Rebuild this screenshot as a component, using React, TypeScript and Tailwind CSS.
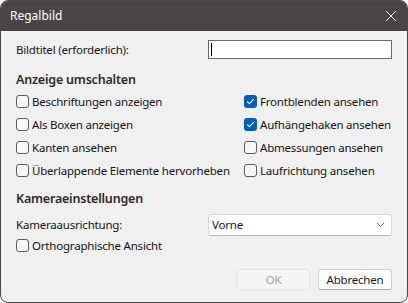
import React from "react";

type Item = { label: string; checked?: boolean; className?: string };

const leftItems: Item[] = [
  { label: "Beschriftungen anzeigen" },
  { label: "Als Boxen anzeigen" },
  { label: "Kanten ansehen" },
  { label: "Überlappende Elemente hervorheben" },
];

const rightItems: Item[] = [
  { label: "Frontblenden ansehen", checked: true },
  { label: "Aufhängehaken ansehen", checked: true },
  { label: "Abmessungen ansehen" },
  { label: "Laufrichtung ansehen" },
];

function Checkbox({ label, checked, className = "h-[23px]" }: Item) {
  return (
    <label className={`flex items-center gap-[3px] whitespace-nowrap ${className}`}>
      {checked ? (
        <span className="w-[13px] h-[13px] rounded-[3px] bg-[#005fb8] flex items-center justify-center shrink-0">
          <svg width="9" height="9" viewBox="0 0 9 9" fill="none">
            <path d="M1.5 4.8 L3.5 6.6 L7.5 2.4" stroke="white" strokeWidth="1.1" strokeLinecap="round" strokeLinejoin="round" />
          </svg>
        </span>
      ) : (
        <span className="w-[13px] h-[13px] rounded-[3px] border border-[#5c5c5c] bg-[#f7f7f7] shrink-0" />
      )}
      <span>{label}</span>
    </label>
  );
}

export default function App() {
  return (
    <div className="w-[408px] h-[303px] bg-white">
      <div
        className="w-[408px] h-[303px] rounded-[8px] overflow-hidden border border-[#4a4947] bg-[#f0f0f0] flex flex-col text-[11.5px] tracking-[-0.2px] text-[#141414]"
        style={{ fontFamily: '"Noto Sans", "Open Sans", sans-serif' }}
      >
        {/* Title bar */}
        <div className="h-[30px] bg-[#474644] flex items-center justify-between pl-[9px] pr-[9px] shrink-0">
          <span className="text-white text-[12px] tracking-normal">Regalbild</span>
          <svg width="12" height="12" viewBox="0 0 12 12" className="mr-[1px]">
            <path d="M1 1 L11 11 M11 1 L1 11" stroke="#e8e8e8" strokeWidth="1" />
          </svg>
        </div>

        <div className="flex-1 flex flex-col pl-[15px] pr-[15px] pt-[9px]">
          <div className="flex items-center justify-between h-[19px]">
            <span>Bildtitel (erforderlich):</span>
            <div className="w-[184px] h-[19px] bg-white border border-[#6a6a6a] flex items-center pl-[2px]">
              <span className="w-[1px] h-[13px] bg-black" />
            </div>
          </div>

          <div className="mt-[12px] font-semibold text-[12.5px] text-[#2b2b2b] h-[19px] flex items-center">
            Anzeige umschalten
          </div>

          <div className="grid grid-cols-[228px_1fr]">
            <div className="flex flex-col">
              {leftItems.map((it) => (
                <Checkbox key={it.label} {...it} />
              ))}
            </div>
            <div className="flex flex-col">
              {rightItems.map((it) => (
                <Checkbox key={it.label} {...it} />
              ))}
            </div>
          </div>

          <div className="mt-[8px] font-semibold text-[12.5px] text-[#2b2b2b] h-[19px] flex items-center">
            Kameraeinstellungen
          </div>

          <div className="mt-[5px] flex items-center justify-between h-[22px]">
            <span>Kameraausrichtung:</span>
            <div className="w-[184px] h-[22px] bg-white border border-[#d9d9d9] border-b-[#b5b5b5] rounded-[3px] flex items-center justify-between pl-[3px] pr-[6px]">
              <span>Vorne</span>
              <svg width="9" height="6" viewBox="0 0 9 6" fill="none">
                <path d="M1 1 L4.5 4.5 L8 1" stroke="#6a6a6a" strokeWidth="1" />
              </svg>
            </div>
          </div>

          <Checkbox label="Orthographische Ansicht" className="h-[19px]" />

          <div className="mt-[14px] flex justify-end gap-[8px]">
            <button className="w-[73px] h-[21px] rounded-[3px] bg-[#f5f5f5] border border-[#e5e5e5] text-[#a3a3a3]">
              OK
            </button>
            <button className="w-[74px] h-[21px] rounded-[3px] bg-white border border-[#d0d0d0] border-b-[#a8a8a8] text-[#1a1a1a]">
              Abbrechen
            </button>
          </div>
        </div>
      </div>
    </div>
  );
}
